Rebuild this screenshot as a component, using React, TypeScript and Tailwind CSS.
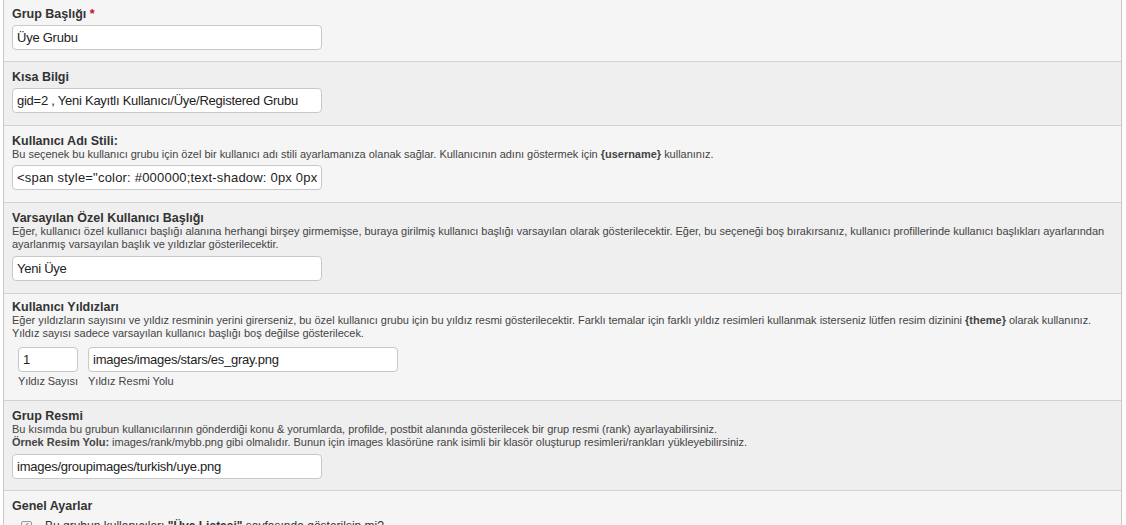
import React from "react";

const input =
  "h-[25px] rounded-[4px] border border-[#c8c8c8] bg-white px-[4px] text-[13px] text-[#222] outline-none";

function Row({ alt, children, className = "" }: { alt?: boolean; children: React.ReactNode; className?: string }) {
  return (
    <div className={`border-b border-[#d2d2d2] px-[8px] ${alt ? "bg-[#efefef]" : "bg-[#f5f5f5]"} ${className}`}>
      {children}
    </div>
  );
}

function Title({ children }: { children: React.ReactNode }) {
  return <div className="text-[12.5px] font-bold leading-[14px] text-[#333]">{children}</div>;
}

function Desc({ children }: { children: React.ReactNode }) {
  return <div className="text-[11px] leading-[13px] tracking-[-0.02px] text-[#444]">{children}</div>;
}

export default function App() {
  return (
    <div className="h-[525px] overflow-hidden bg-white font-['Liberation_Sans',Arial,sans-serif]">
      <div className="ml-[3px] w-[1119px] border-x border-[#c8c8c8]">
        {/* Grup Başlığı */}
        <Row className="pt-[7px] pb-[11px]">
          <Title>
            Grup Başlığı <span className="text-[#c8102e]">*</span>
          </Title>
          <input className={`${input} mt-[4px] w-[310px] tracking-[-0.25px]`} defaultValue="Üye Grubu" />
        </Row>

        {/* Kısa Bilgi */}
        <Row alt className="pt-[8px] pb-[12px]">
          <Title>Kısa Bilgi</Title>
          <input
            className={`${input} mt-[4px] w-[310px] tracking-[-0.25px]`}
            defaultValue="gid=2 , Yeni Kayıtlı Kullanıcı/Üye/Registered Grubu"
          />
        </Row>

        {/* Kullanıcı Adı Stili */}
        <Row className="pt-[8px] pb-[12px]">
          <Title>Kullanıcı Adı Stili:</Title>
          <Desc>
            Bu seçenek bu kullanıcı grubu için özel bir kullanıcı adı stili ayarlamanıza olanak sağlar. Kullanıcının
            adını göstermek için <b>{"{username}"}</b> kullanınız.
          </Desc>
          <input
            className={`${input} mt-[4px] w-[310px] tracking-[0.2px]`}
            defaultValue={'<span style="color: #000000;text-shadow: 0px 0px 3px #ffffff;">{username}</span>'}
          />
        </Row>

        {/* Varsayılan Özel Kullanıcı Başlığı */}
        <Row alt className="pt-[8px] pb-[12px]">
          <Title>Varsayılan Özel Kullanıcı Başlığı</Title>
          <Desc>
            Eğer, kullanıcı özel kullanıcı başlığı alanına herhangi birşey girmemişse, buraya girilmiş kullanıcı başlığı
            varsayılan olarak gösterilecektir. Eğer, bu seçeneği boş bırakırsanız, kullanıcı profillerinde kullanıcı
            başlıkları ayarlarından
            <br />
            ayarlanmış varsayılan başlık ve yıldızlar gösterilecektir.
          </Desc>
          <input className={`${input} mt-[5px] w-[310px] tracking-[-0.25px]`} defaultValue="Yeni Üye" />
        </Row>

        {/* Kullanıcı Yıldızları */}
        <Row className="pt-[6px] pb-[12px]">
          <Title>Kullanıcı Yıldızları</Title>
          <Desc>
            Eğer yıldızların sayısını ve yıldız resminin yerini girerseniz, bu özel kullanıcı grubu için bu yıldız resmi
            gösterilecektir. Farklı temalar için farklı yıldız resimleri kullanmak isterseniz lütfen resim dizinini{" "}
            <b>{"{theme}"}</b> olarak kullanınız.
            <br />
            Yıldız sayısı sadece varsayılan kullanıcı başlığı boş değilse gösterilecek.
          </Desc>
          <div className="mt-[7px] flex gap-[10px] pl-[6px]">
            <div className="flex flex-col">
              <input className={`${input} w-[60px] tracking-[-0.25px]`} defaultValue="1" />
              <span className="mt-[3px] text-[11px] leading-[13px] tracking-[-0.1px] text-[#444]">Yıldız Sayısı</span>
            </div>
            <div className="flex flex-col">
              <input className={`${input} w-[310px] tracking-[-0.25px]`} defaultValue="images/images/stars/es_gray.png" />
              <span className="mt-[3px] text-[11px] leading-[13px] text-[#444]">Yıldız Resmi Yolu</span>
            </div>
          </div>
        </Row>

        {/* Grup Resmi */}
        <Row alt className="pt-[8px] pb-[11px]">
          <Title>Grup Resmi</Title>
          <Desc>
            Bu kısımda bu grubun kullanıcılarının gönderdiği konu &amp; yorumlarda, profilde, postbit alanında
            gösterilecek bir grup resmi (rank) ayarlayabilirsiniz.
            <br />
            <b>Örnek Resim Yolu:</b> images/rank/mybb.png gibi olmalıdır. Bunun için images klasörüne rank isimli bir
            klasör oluşturup resimleri/rankları yükleyebilirsiniz.
          </Desc>
          <input
            className={`${input} mt-[5px] w-[310px] tracking-[-0.25px]`}
            defaultValue="images/groupimages/turkish/uye.png"
          />
        </Row>

        {/* Genel Ayarlar */}
        <Row className="pt-[8px] pb-[11px]">
          <Title>Genel Ayarlar</Title>
          <div className="mt-[5px] flex items-center gap-[13px] pl-[9px] text-[12px] leading-[16px] text-[#333]">
            <span className="flex h-[11px] w-[11px] items-center justify-center rounded-[2px] border border-[#9a9a9a] bg-[#f0f0f0] text-[8px] leading-none text-[#555]">
              ✓
            </span>
            <span>
              Bu grubun kullanıcıları <b>"Üye Listesi"</b> sayfasında gösterilsin mi?
            </span>
          </div>
        </Row>
      </div>
    </div>
  );
}
